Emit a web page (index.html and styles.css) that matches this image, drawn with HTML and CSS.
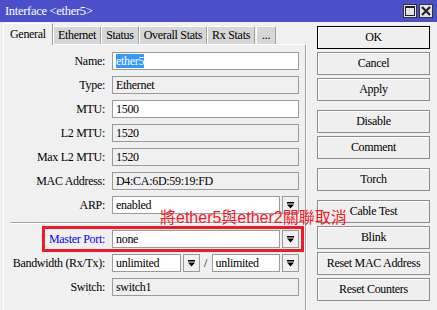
FILE: index.html
```html
<!DOCTYPE html>
<html lang="en">
<head>
  <meta charset="UTF-8">
  <title>Interface &lt;ether5&gt;</title>
  <link rel="stylesheet" href="styles.css">
</head>
<body>
  <div class="window">
    <div class="titlebar">
      <span class="title">Interface &lt;ether5&gt;</span>
      <div class="title-btns">
        <span class="tbtn">
          <svg width="10" height="10" viewBox="0 0 10 10"><rect x="0.5" y="0.5" width="9" height="9" fill="none" stroke="#222"/><rect x="0" y="0" width="10" height="2" fill="#222"/></svg>
        </span>
        <span class="tbtn">
          <svg width="10" height="10" viewBox="0 0 10 10"><path d="M1 1L9 9M9 1L1 9" stroke="#222" stroke-width="2.2"/></svg>
        </span>
      </div>
    </div>

    <div class="main">
      <div class="left">
        <div class="tabs">
          <div class="tab active">General</div>
          <div class="tab">Ethernet</div>
          <div class="tab">Status</div>
          <div class="tab">Overall Stats</div>
          <div class="tab">Rx Stats</div>
          <div class="tab more">...</div>
        </div>
        <div class="panel">
          <div class="row"><label>Name:</label><div class="field edit"><span class="sel">ether5</span></div></div>
          <div class="row"><label>Type:</label><div class="field">Ethernet</div></div>
          <div class="row"><label>MTU:</label><div class="field edit">1500</div></div>
          <div class="row"><label>L2 MTU:</label><div class="field">1520</div></div>
          <div class="row"><label>Max L2 MTU:</label><div class="field">1520</div></div>
          <div class="row"><label>MAC Address:</label><div class="field">D4:CA:6D:59:19:FD</div></div>
          <div class="row">
            <label>ARP:</label>
            <div class="combo">
              <div class="field edit">enabled</div>
              <span class="dd"><svg width="7" height="7" viewBox="0 0 7 7"><rect width="7" height="1.5"/><path d="M0 2.5H7L3.5 6.5Z"/></svg></span>
            </div>
          </div>
          <div class="sep"></div>
          <div class="row">
            <label class="link">Master Port:</label>
            <div class="combo">
              <div class="field edit">none</div>
              <span class="dd"><svg width="7" height="7" viewBox="0 0 7 7"><rect width="7" height="1.5"/><path d="M0 2.5H7L3.5 6.5Z"/></svg></span>
            </div>
          </div>
          <div class="row">
            <label>Bandwidth (Rx/Tx):</label>
            <div class="combo">
              <div class="field edit">unlimited</div>
              <span class="dd"><svg width="7" height="7" viewBox="0 0 7 7"><rect width="7" height="1.5"/><path d="M0 2.5H7L3.5 6.5Z"/></svg></span>
              <span class="slash">/</span>
              <div class="field edit">unlimited</div>
              <span class="dd"><svg width="7" height="7" viewBox="0 0 7 7"><rect width="7" height="1.5"/><path d="M0 2.5H7L3.5 6.5Z"/></svg></span>
            </div>
          </div>
          <div class="row"><label>Switch:</label><div class="field">switch1</div></div>
        </div>
      </div>

      <div class="buttons">
        <button class="btn default">OK</button>
        <button class="btn">Cancel</button>
        <button class="btn">Apply</button>
        <button class="btn group">Disable</button>
        <button class="btn">Comment</button>
        <button class="btn group">Torch</button>
        <button class="btn group">Cable Test</button>
        <button class="btn">Blink</button>
        <button class="btn">Reset MAC Address</button>
        <button class="btn">Reset Counters</button>
      </div>
    </div>

    <!-- annotation -->
    <div class="note-box"></div>
    <div class="note-text">將ether5與ether2關聯取消</div>
  </div>
</body>
</html>
```

FILE: styles.css
```css
body {
  margin: 0;
  background-color: #f0f0f0;
  font-family: "Liberation Serif", serif;
  font-size: 12px;
  letter-spacing: -0.3px;
  color: #000;
}
.window {
  position: relative;
  width: 437px;
  height: 310px;
  overflow: hidden;
}
.titlebar {
  height: 22px;
  background-color: #4b4fc8;
  color: #fff;
  display: flex;
  align-items: center;
  justify-content: space-between;
  padding: 0 4px 0 5px;
  box-sizing: border-box;
}
.title {
  font-size: 12.5px;
}
.title-btns {
  display: flex;
  gap: 2px;
}
.tbtn {
  width: 14px;
  height: 14px;
  box-sizing: border-box;
  border: 1px solid #333;
  background-color: #e4e4e4;
  display: flex;
  align-items: center;
  justify-content: center;
}
.main {
  display: flex;
  padding-left: 3px;
}
.left {
  width: 303px;
}
.tabs {
  display: flex;
  align-items: flex-end;
  height: 22px;
}
.tab {
  height: 18px;
  padding: 0 4px;
  background-color: #d6d6d6;
  border-top: 1px solid #fff;
  border-left: 1px solid #fff;
  border-right: 1px solid #a0a0a0;
  display: flex;
  align-items: center;
  box-sizing: border-box;
}
.tab.active {
  height: 22px;
  padding: 0 6px;
  background-color: #f0f0f0;
  margin-bottom: -1px;
  position: relative;
}
.tab.more {
  margin-left: 1px;
  padding: 0 5px;
}
.panel {
  height: 280px;
  border-top: 1px solid #fff;
  border-left: 1px solid #fff;
  border-right: 1px solid #a0a0a0;
  box-shadow: 1px 0 0 #fff;
  padding-top: 7px;
  display: flex;
  flex-direction: column;
  gap: 6px;
}
.row {
  display: grid;
  grid-template-columns: 101px 187px;
  column-gap: 7px;
  height: 18px;
  align-items: center;
}
.row label {
  text-align: right;
}
.row label.link {
  color: #0000ff;
}
.field {
  height: 18px;
  box-sizing: border-box;
  border: 1px solid #9a9a9a;
  background-color: #f0f0f0;
  padding: 0 3px;
  line-height: 16px;
  white-space: nowrap;
  overflow: hidden;
}
.field.edit {
  background-color: #fff;
}
.sel {
  background-color: #3399ff;
  color: #fff;
}
.combo {
  display: flex;
  gap: 2px;
}
.combo .field {
  flex: 1;
}
.dd {
  width: 17px;
  height: 18px;
  flex: none;
  box-sizing: border-box;
  border: 1px solid #9a9a9a;
  background-color: #f0f0f0;
  display: flex;
  align-items: center;
  justify-content: center;
}
.slash {
  width: 8px;
  flex: none;
  text-align: center;
  line-height: 18px;
}
.sep {
  height: 1px;
  margin: 2px 0 1px 7px;
  background-color: #a0a0a0;
  box-shadow: 0 1px 0 #fff;
}
.buttons {
  display: flex;
  flex-direction: column;
  gap: 3px;
  margin-left: 11px;
  padding-top: 4px;
  width: 113px;
}
.btn {
  height: 23px;
  box-sizing: border-box;
  border: 1px solid #8c8c8c;
  box-shadow: inset 1px 1px 0 #fff;
  background-color: #efefef;
  font-family: "Liberation Serif", serif;
  font-size: 12px;
  letter-spacing: -0.3px;
  color: #000;
  padding: 0;
  margin: 0;
}
.btn.default {
  border-color: #000;
}
.btn.group {
  margin-top: 6px;
}
.note-box {
  position: absolute;
  left: 42px;
  top: 226px;
  width: 262px;
  height: 26px;
  box-sizing: border-box;
  border: 3px solid #ee1c2b;
}
.note-text {
  position: absolute;
  left: 160px;
  top: 208px;
  font-family: "Liberation Sans", "Noto Sans CJK TC", sans-serif;
  font-size: 16px;
  line-height: 20px;
  letter-spacing: 0;
  color: #ee1c2b;
  white-space: nowrap;
}
```
